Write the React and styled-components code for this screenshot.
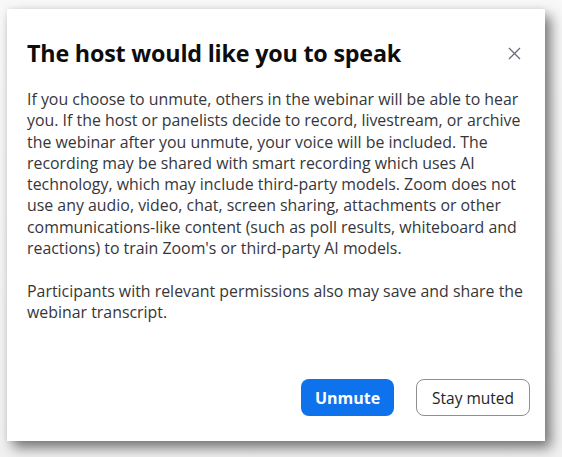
import React from "react";
import styled, { createGlobalStyle } from "styled-components";

const Global = createGlobalStyle`
  html, body { margin: 0; padding: 0; background: #f4f4f4; }
  body { width: 562px; height: 457px; overflow: hidden; font-family: "Open Sans", "Noto Sans", sans-serif; }
`;

const Page = styled.div`
  width: 562px;
  height: 457px;
  padding: 9px 0 0 7px;
  box-sizing: border-box;
  background: linear-gradient(180deg, #f8f8f8 0%, #f1f1f1 100%);
`;

const Dialog = styled.div`
  width: 538px;
  height: 432px;
  box-sizing: border-box;
  background: #ffffff;
  display: flex;
  flex-direction: column;
  padding: 28px 15px 25px 20px;
  box-shadow: 6px 7px 12px rgba(0, 0, 0, 0.5), 0 0 6px rgba(0, 0, 0, 0.08);
`;

const Header = styled.div`
  display: flex;
  align-items: center;
  justify-content: space-between;
  padding-right: 9px;
`;

const Title = styled.h1`
  margin: 0;
  font-size: 23.3px;
  line-height: 32px;
  font-weight: 700;
  color: #0d0d0d;
  letter-spacing: -0.2px;
`;

const Close = styled.button`
  border: 0;
  background: none;
  padding: 0;
  width: 14px;
  height: 14px;
  display: flex;
  align-items: center;
  justify-content: center;
  cursor: pointer;
`;

const Body = styled.div`
  margin-top: 20px;
`;

const Para = styled.p`
  margin: 0 0 21.3px 0;
  font-size: 15.9px;
  line-height: 21.3px;
  color: #36363a;
  white-space: nowrap;
`;

const Footer = styled.div`
  margin-top: auto;
  display: flex;
  justify-content: flex-end;
  gap: 22px;
`;

const Button = styled.button`
  height: 37px;
  box-sizing: border-box;
  border-radius: 8px;
  font-family: "Open Sans", "Noto Sans", sans-serif;
  font-size: ${(p) => (p.$primary ? "16px" : "15.5px")};
  padding: 0;
  white-space: nowrap;
  cursor: pointer;
  background: ${(p) => (p.$primary ? "#0e72ed" : "#ffffff")};
  color: ${(p) => (p.$primary ? "#ffffff" : "#232323")};
  font-weight: ${(p) => (p.$primary ? 700 : 400)};
  border: ${(p) => (p.$primary ? "none" : "1px solid #8f8f8f")};
  width: ${(p) => p.$w}px;
`;

const lines1 = [
  "If you choose to unmute, others in the webinar will be able to hear",
  "you. If the host or panelists decide to record, livestream, or archive",
  "the webinar after you unmute, your voice will be included. The",
  "recording may be shared with smart recording which uses AI",
  "technology, which may include third-party models. Zoom does not",
  "use any audio, video, chat, screen sharing, attachments or other",
  "communications-like content (such as poll results, whiteboard and",
  "reactions) to train Zoom's or third-party AI models.",
];
const lines2 = [
  "Participants with relevant permissions also may save and share the",
  "webinar transcript.",
];

const renderLines = (lines) =>
  lines.map((l, i) => (
    <React.Fragment key={i}>
      {l}
      {i < lines.length - 1 && <br />}
    </React.Fragment>
  ));

export default function App() {
  return (
    <>
      <Global />
      <Page>
        <Dialog>
          <Header>
            <Title>The host would like you to speak</Title>
            <Close aria-label="Close">
              <svg width="13" height="13" viewBox="0 0 13 13">
                <path d="M1 1 L12 12 M12 1 L1 12" stroke="#6b6b78" strokeWidth="1.3" fill="none" />
              </svg>
            </Close>
          </Header>
          <Body>
            <Para>{renderLines(lines1)}</Para>
            <Para>{renderLines(lines2)}</Para>
          </Body>
          <Footer>
            <Button $primary $w={93}>Unmute</Button>
            <Button $w={114}>Stay muted</Button>
          </Footer>
        </Dialog>
      </Page>
    </>
  );
}
